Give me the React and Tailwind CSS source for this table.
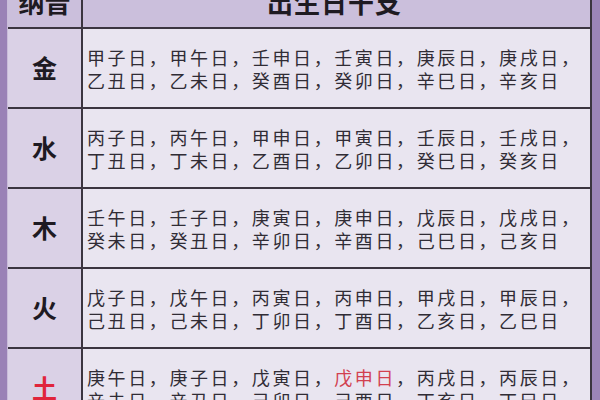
import React from "react";

const rows = [
  {
    el: "金",
    lines: [
      ["甲子日", "甲午日", "壬申日", "壬寅日", "庚辰日", "庚戌日"],
      ["乙丑日", "乙未日", "癸酉日", "癸卯日", "辛巳日", "辛亥日"],
    ],
  },
  {
    el: "水",
    lines: [
      ["丙子日", "丙午日", "甲申日", "甲寅日", "壬辰日", "壬戌日"],
      ["丁丑日", "丁未日", "乙酉日", "乙卯日", "癸巳日", "癸亥日"],
    ],
  },
  {
    el: "木",
    lines: [
      ["壬午日", "壬子日", "庚寅日", "庚申日", "戊辰日", "戊戌日"],
      ["癸未日", "癸丑日", "辛卯日", "辛酉日", "己巳日", "己亥日"],
    ],
  },
  {
    el: "火",
    lines: [
      ["戊子日", "戊午日", "丙寅日", "丙申日", "甲戌日", "甲辰日"],
      ["己丑日", "己未日", "丁卯日", "丁酉日", "乙亥日", "乙巳日"],
    ],
  },
  {
    el: "土",
    red: true,
    lines: [
      ["庚午日", "庚子日", "戊寅日", "戊申日", "丙戌日", "丙辰日"],
      ["辛未日", "辛丑日", "己卯日", "己酉日", "丁亥日", "丁巳日"],
    ],
  },
];

function Line({ days, last, highlight }) {
  return (
    <div className="whitespace-nowrap">
      {days.map((d, i) => (
        <span key={i}>
          <span className={highlight === d ? "text-[#d2404f]" : ""}>{d}</span>
          {i < days.length - 1 || !last ? "，" : ""}
        </span>
      ))}
    </div>
  );
}

export default function App() {
  return (
    <div
      className="flex w-[600px] h-[400px] overflow-hidden bg-[#9c85b9]"
      style={{ fontFamily: '"Noto Sans CJK SC", "Noto Sans", sans-serif' }}
    >
      <div className="w-[7px] shrink-0 bg-[#9a82b6]" />
      <div className="w-[585px] shrink-0 flex flex-col border-l border-[#c9bcd9] border-r-2 border-r-[#3b3540]">
        {/* header */}
        <div className="flex h-[27px] shrink-0 bg-[#cbbfdc] overflow-hidden">
          <div className="w-[75px] shrink-0 border-r-2 border-[#3b3540] flex justify-center">
            <span className="-mt-[11px] text-[26px] leading-[26px] font-bold text-[#1e1a22]">纳音</span>
          </div>
          <div className="flex-1 flex justify-center">
            <span className="-mt-[11px] pr-[4px] text-[26px] leading-[26px] font-bold tracking-[1px] text-[#1e1a22]">
              出生日干支
            </span>
          </div>
        </div>
        {rows.map((r, idx) => (
          <div key={idx} className="flex h-[80px] shrink-0 border-t-2 border-[#3b3540]">
            <div className="w-[75px] shrink-0 border-r-2 border-[#3b3540] bg-[#dad1e6] flex items-center justify-center">
              <span className={`text-[25px] font-bold ${r.red ? "text-[#e0243c]" : "text-[#1e1a22]"}`}>{r.el}</span>
            </div>
            <div className="flex-1 bg-[#e9e5f0] flex flex-col justify-center pl-[4px] pt-[2px] text-[18px] leading-[23px] tracking-[2.6px] text-[#302c35]">
              <Line days={r.lines[0]} last={false} highlight={r.red ? "戊申日" : null} />
              <Line days={r.lines[1]} last={true} />
            </div>
          </div>
        ))}
      </div>
      <div className="flex-1 bg-[#9c85b9]" />
    </div>
  );
}
